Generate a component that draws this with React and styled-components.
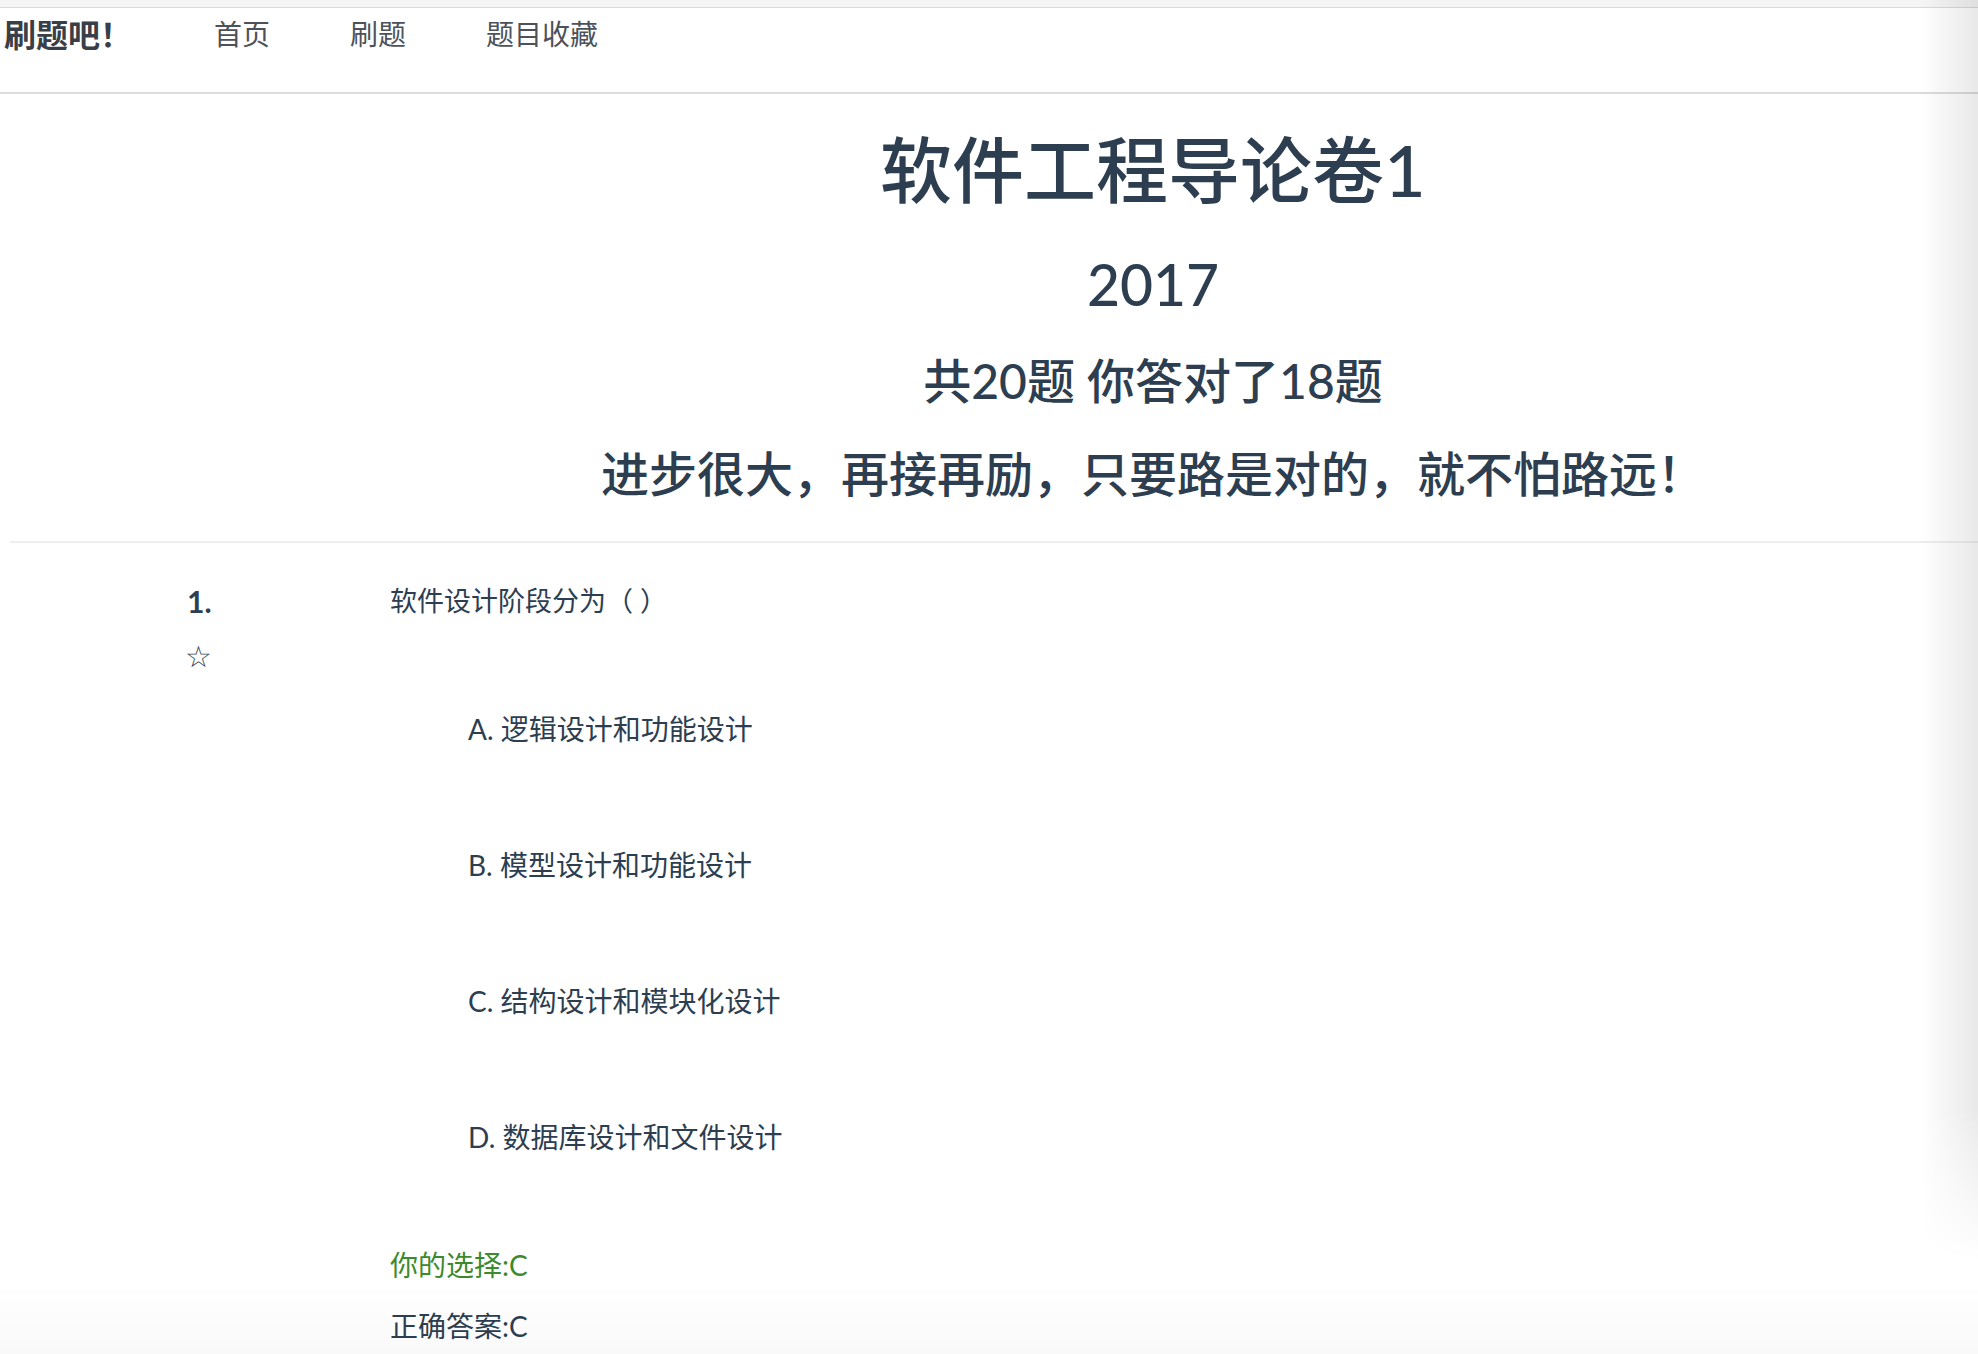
import React from 'react';
import styled, { createGlobalStyle } from 'styled-components';

const GlobalStyle = createGlobalStyle`
  html, body {
    margin: 0;
    padding: 0;
    background: #ffffff;
  }
  body {
    font-family: Lato, "Noto Sans CJK SC", "Noto Sans", sans-serif;
    color: #2c3e50;
    -webkit-font-smoothing: antialiased;
  }
`;

const PageWrapper = styled.div`
  min-height: 1354px;
  display: flex;
  flex-direction: column;
`;

const TopStrip = styled.div`
  height: 7px;
  background-color: #f5f5f5;
  border-bottom: 1px solid #dadada;
`;

const NavBar = styled.nav`
  height: 77px;
  padding-top: 7px;
  display: flex;
  align-items: flex-start;
  border-bottom: 2px solid #dcdcdf;
`;

const Logo = styled.span`
  font-family: "Noto Sans CJK SC", sans-serif;
  font-size: 32px;
  font-weight: 700;
  line-height: 36px;
  color: #3a3e46;
  padding-left: 4px;
  min-width: 170px;
`;

const NavLink = styled.a`
  font-family: "Noto Sans CJK SC", sans-serif;
  font-size: 28px;
  line-height: 36px;
  color: #4d525a;
  padding: 0 40px;
  text-decoration: none;
  cursor: pointer;
`;

const Header = styled.header`
  display: flex;
  flex-direction: column;
  align-items: center;
  padding: 32px 0 38px 318px;
  margin-left: 10px;
  border-bottom: 2px solid #eeeeee;
`;

const Heading = styled.div`
  font-size: ${({size}) => size}px;
  line-height: ${({lh}) => lh}px;
  margin-top: ${({gap}) => gap || 0}px;
  font-weight: 500;
  color: #2c3e50;
  white-space: nowrap;
`;

const QuestionRow = styled.section`
  display: grid;
  grid-template-columns: 203px 1fr;
  padding: 41px 0 0 187px;
`;

const Side = styled.div`
  display: flex;
  flex-direction: column;
  gap: 16px;
  margin-top: -3px;
`;

const Number = styled.div`
  font-size: 30px;
  font-weight: 700;
  line-height: 40px;
`;

const Star = styled.span`
  font-family: "DejaVu Sans", sans-serif;
  font-size: 30px;
  line-height: 40px;
  color: #3c4a5c;
  cursor: pointer;
  margin-left: -2px;
`;

const Body = styled.div`
  display: flex;
  flex-direction: column;
`;

const QuestionText = styled.div`
  font-size: 27px;
  line-height: 40px;
  margin-top: -3px;
`;

const OptionList = styled.ul`
  list-style: none;
  margin: 88px 0 0 0;
  padding: 0 0 0 78px;
  display: flex;
  flex-direction: column;
  gap: 96px;
`;

const Option = styled.li`
  font-size: 28px;
  line-height: 40px;
`;

const Result = styled.div`
  font-size: 28px;
  line-height: 40px;
  color: ${({good}) => (good ? '#3c8a2c' : '#2c3e50')};
  margin-top: ${({gap}) => gap}px;
`;

const EdgeShade = styled.div`
  position: fixed;
  top: 0;
  right: 0;
  width: 58px;
  height: 100vh;
  pointer-events: none;
  background: linear-gradient(to right, rgba(0, 0, 0, 0), rgba(0, 0, 0, 0.085));
  -webkit-mask-image: linear-gradient(to bottom, #000 0, #000 1110px, transparent 1260px);
  mask-image: linear-gradient(to bottom, #000 0, #000 1110px, transparent 1260px);
`;

const BottomShade = styled.div`
  position: fixed;
  left: 0;
  right: 0;
  bottom: 0;
  height: 70px;
  pointer-events: none;
  background: linear-gradient(to bottom, rgba(0, 0, 0, 0), rgba(0, 0, 0, 0.025));
`;

const options = [
  'A. 逻辑设计和功能设计',
  'B. 模型设计和功能设计',
  'C. 结构设计和模块化设计',
  'D. 数据库设计和文件设计',
];

const App = () => (
  <PageWrapper>
    <GlobalStyle />
    <TopStrip />
    <NavBar>
      <Logo>刷题吧！</Logo>
      <NavLink>首页</NavLink>
      <NavLink>刷题</NavLink>
      <NavLink>题目收藏</NavLink>
    </NavBar>

    <Header>
      <Heading size={72} lh={86}>软件工程导论卷1</Heading>
      <Heading size={57} lh={74} gap={35}>2017</Heading>
      <Heading size={48} lh={58} gap={31}>共20题 你答对了18题</Heading>
      <Heading size={48} lh={58} gap={35}>进步很大，再接再励，只要路是对的，就不怕路远！</Heading>
    </Header>

    <QuestionRow>
      <Side>
        <Number>1.</Number>
        <Star>☆</Star>
      </Side>
      <Body>
        <QuestionText>软件设计阶段分为（ ）</QuestionText>
        <OptionList>
          {options.map((o) => (
            <Option key={o}>{o}</Option>
          ))}
        </OptionList>
        <Result good gap={88}>你的选择:C</Result>
        <Result gap={21}>正确答案:C</Result>
      </Body>
    </QuestionRow>

    <EdgeShade />
    <BottomShade />
  </PageWrapper>
);

export default App;
